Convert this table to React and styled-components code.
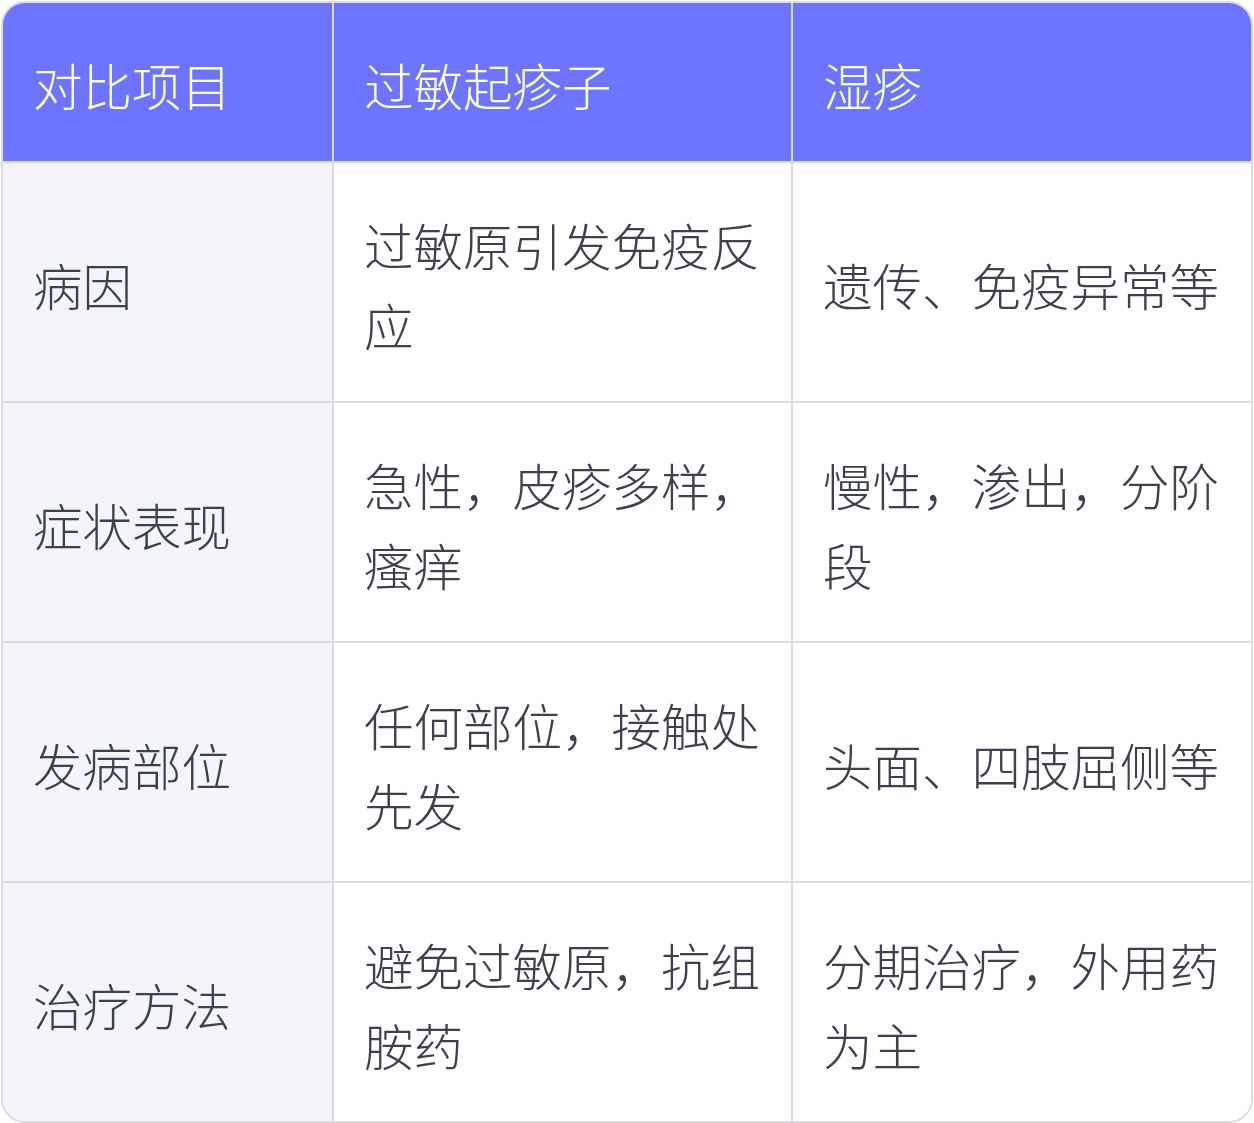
import React from "react";
import styled, { createGlobalStyle } from "styled-components";

const Global = createGlobalStyle`
  html, body { margin: 0; padding: 0; background: #ffffff; }
  body { font-family: "Noto Sans CJK SC", "Noto Sans", sans-serif; }
`;

const Wrapper = styled.div`
  box-sizing: border-box;
  width: 1252px;
  margin: 1px;
  border: 2px solid #dcdde2;
  border-radius: 24px;
  overflow: hidden;
  display: grid;
  grid-template-columns: 331px 459px 1fr;
  background: #ffffff;
`;

const Cell = styled.div`
  box-sizing: border-box;
  display: flex;
  align-items: center;
  padding: 42px 27px 36px 30px;
  min-height: ${(p) => (p.$head ? "159px" : p.$bottom ? "238px" : "240px")};
  font-size: 49.5px;
  line-height: 80px;
  font-weight: 300;
  color: ${(p) => (p.$head ? "#ffffff" : "#3d404d")};
  background: ${(p) => (p.$head ? "#6d74ff" : p.$first ? "#f4f5f9" : "#ffffff")};
  border-right: ${(p) => (p.$last ? "none" : "2px solid #dcdde2")};
  border-bottom: ${(p) => (p.$bottom ? "none" : "2px solid #dcdde2")};
  word-break: break-all;
`;

const head = ["对比项目", "过敏起疹子", "湿疹"];
const rows = [
  ["病因", "过敏原引发免疫反应", "遗传、免疫异常等"],
  ["症状表现", "急性，皮疹多样，瘙痒", "慢性，渗出，分阶段"],
  ["发病部位", "任何部位，接触处先发", "头面、四肢屈侧等"],
  ["治疗方法", "避免过敏原，抗组胺药", "分期治疗，外用药为主"],
];

export default function App() {
  return (
    <>
      <Global />
      <Wrapper>
        {head.map((h, i) => (
          <Cell key={h} $head $last={i === 2}>
            {h}
          </Cell>
        ))}
        {rows.map((r, ri) =>
          r.map((c, ci) => (
            <Cell
              key={ri + "-" + ci}
              $first={ci === 0}
              $last={ci === 2}
              $bottom={ri === rows.length - 1}
            >
              {c}
            </Cell>
          ))
        )}
      </Wrapper>
    </>
  );
}
